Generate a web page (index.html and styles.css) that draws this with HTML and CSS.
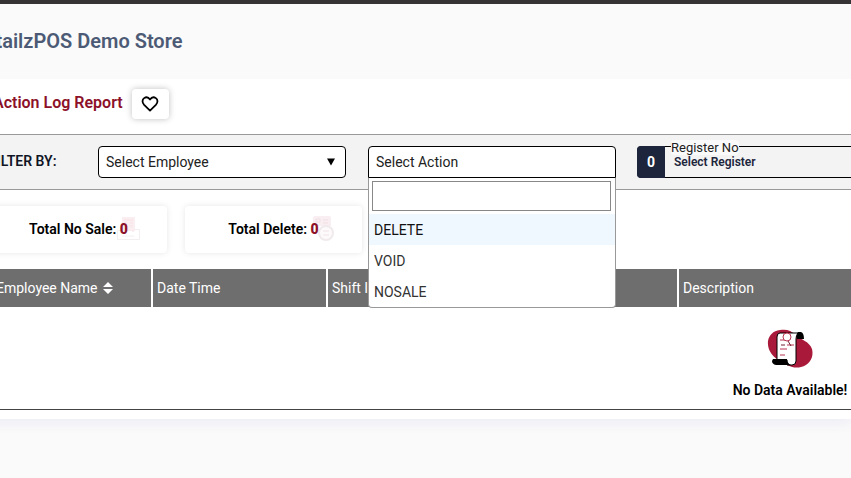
FILE: index.html
```html
<!DOCTYPE html>
<html lang="en">
<head>
    <meta charset="UTF-8">
    <meta name="viewport" content="width=device-width, initial-scale=1.0">
    <title>Action Log Report</title>
    <link rel="stylesheet" href="styles.css">
</head>
<body>
<div class="page">
    <header class="store-header">
        <h2 class="store-name">RetailzPOS Demo Store</h2>
    </header>

    <main class="report">
        <div class="title-row">
            <h1 class="report-title">Action Log Report</h1>
            <button class="fav-btn" type="button" aria-label="Favourite">
                <svg width="18" height="16" viewBox="0 0 20 18" fill="none" stroke="#000" stroke-width="2" stroke-linejoin="round">
                    <path d="M10 16.5 L3.4 10 C0.8 7.2 1.2 4 3.4 2.4 C5.8 0.8 8.4 1.6 10 4 C11.6 1.6 14.2 0.8 16.6 2.4 C18.8 4 19.2 7.2 16.6 10 Z"/>
                </svg>
            </button>
        </div>

        <!-- Filters -->
        <form class="filters">
            <span class="filters-label">FILTER BY:</span>
            <div class="select-wrap">
                <select class="control" aria-label="Employee">
                    <option>Select Employee</option>
                </select>
                <svg class="caret" width="8" height="8" viewBox="0 0 8 8"><path d="M0 0.5h8L4 7.5z"/></svg>
            </div>
            <div class="combo">
                <button class="control combo-btn" type="button" aria-haspopup="listbox" aria-expanded="true">Select Action</button>
                <div class="combo-menu">
                    <input class="combo-search" type="text" aria-label="Search action">
                    <ul class="combo-list" role="listbox">
                        <li class="combo-option active" role="option" aria-selected="true">DELETE</li>
                        <li class="combo-option" role="option">VOID</li>
                        <li class="combo-option" role="option">NOSALE</li>
                    </ul>
                </div>
            </div>
            <div class="register">
                <span class="register-count">0</span>
                <label class="register-label" for="register">Register No</label>
                <button class="register-btn" id="register" type="button">Select Register</button>
            </div>
        </form>

        <!-- Totals -->
        <div class="totals">
            <div class="total-card">
                <svg class="total-icon" width="26" height="26" viewBox="0 0 26 26">
                    <path fill="#fbeef1" d="M7 1h13v14H7z"/>
                    <path fill="none" stroke="#f6e0e5" d="M9 4h9M9 7h3M15 7h3M9 10h3M15 10h3M17 15h2"/>
                    <path fill="none" stroke="#f3eef0" d="M2.5 14.5h5M19.5 13.5h5v10h-22v-9M7 20h12"/>
                </svg>
                <span>Total No Sale: <b class="total-value">0</b></span>
            </div>
            <div class="total-card">
                <svg class="total-icon" width="26" height="26" viewBox="0 0 26 26">
                    <path fill="#f9eef1" d="M3 2q0-2 2-2h14q2 0 2 2v8H3z"/>
                    <path fill="none" stroke="#f1dfe4" d="M6 3h4v3H6zM13 4h5M13 7h5"/>
                    <circle cx="16" cy="17" r="7" fill="#fdfafb" stroke="#f0eaec" stroke-width="2"/>
                    <path fill="none" stroke="#f6eef0" stroke-width="2" d="M13 15h6M13 19h6"/>
                </svg>
                <span>Total Delete: <b class="total-value">0</b></span>
            </div>
        </div>

        <div class="table-wrap">
            <table class="log-table">
                <thead>
                <tr>
                    <th class="col-employee">Employee Name
                        <svg class="sort" width="10" height="12" viewBox="0 0 10 12"><path fill="#fff" d="M5 0l5 5H0zM0 7h10l-5 5z"/></svg>
                    </th>
                    <th class="col-date">Date Time</th>
                    <th class="col-shift">Shift Id</th>
                    <th>Description</th>
                </tr>
                </thead>
                <tbody>
                <tr>
                    <td class="empty" colspan="4">
                        <svg class="empty-icon" width="46" height="40" viewBox="0 0 46 40">
                            <path fill="#a9193a" d="M13 1C19 0 24 1 29 6C34 11 42 12 45 20C47 28 43 36 34 38C26 40 19 36 14 32C6 29 0 21 1 12C2 6 6 2 13 1Z"/>
                            <path fill="#fff" stroke="#000" d="M13 4H31Q29 6 29 10V32Q29 36 25 36H20V31H10V8Q10 4 13 4Z"/>
                            <path d="M31 3H34Q37 4 37 10H30V6Q30 4 31 3ZM6 30H20Q20 34 24 36H9Q5 35 5 32Z"/>
                            <path fill="none" stroke="#b83550" d="M13 11h6M13 20h7M13 26h5M20 16h7"/>
                            <circle cx="20" cy="8" r="4" fill="#fff" stroke="#b83550"/>
                            <path fill="none" stroke="#702030" d="M21 12l3 5M14 16h4"/>
                        </svg>
                        <span class="empty-text">No Data Available!</span>
                    </td>
                </tr>
                </tbody>
            </table>
        </div>
    </main>
</div>
</body>
</html>
```

FILE: styles.css
```css
* {
    box-sizing: border-box;
}

body {
    margin: 0;
    min-height: 100vh;
    overflow: hidden;
    background-color: #fafafa;
    border-top: 4px solid #353334;
    font-family: Roboto, "Liberation Sans", sans-serif;
    font-size: 14px;
    color: #000;
}

button, input, select {
    font: inherit;
    color: inherit;
}

/* the page is scrolled a little to the right */
.page {
    margin-left: -32px;
}

.store-header {
    display: flex;
    align-items: center;
    height: 75px;
    padding: 0 4px 2px;
}

.store-name {
    margin: 0;
    font-size: 20px;
    font-weight: 600;
    color: #4c5a75;
}

.report {
    padding-bottom: 9px;
    background-color: #fff;
    box-shadow: 0 4px 12px #ececf6;
    clip-path: inset(0 0 -24px 0);
}

.title-row {
    display: flex;
    align-items: center;
    gap: 9px;
    padding: 10px 25px 15px;
}

.report-title {
    margin: 0;
    padding-bottom: 4px;
    font-size: 16px;
    font-weight: 600;
    color: #8c1129;
}

.fav-btn {
    display: flex;
    align-items: center;
    justify-content: center;
    width: 37px;
    height: 30px;
    padding: 0;
    border: none;
    border-radius: 4px;
    background-color: #fff;
    box-shadow: 0 0 6px rgba(0, 0, 0, 0.25);
}

.filters {
    display: grid;
    grid-template-columns: 87px 248px 248px 248px;
    column-gap: 22px;
    align-items: center;
    height: 56px;
    padding-left: 21px;
    border-top: 1px solid #999;
    border-bottom: 1px solid #999;
    background-color: #f3f3f3;
}

.filters-label {
    padding-bottom: 3px;
    font-weight: 600;
    color: #101526;
}

.select-wrap, .combo, .register {
    position: relative;
}

.control {
    display: block;
    width: 100%;
    height: 32px;
    padding: 0 7px;
    border: 1px solid #000;
    border-radius: 4px;
    background-color: #fff;
    color: #222;
    text-align: left;
    appearance: none;
}

.caret {
    position: absolute;
    top: 12px;
    right: 11px;
    pointer-events: none;
}

.combo-btn {
    border-radius: 4px 4px 0 0;
}

.combo-menu {
    position: absolute;
    z-index: 2;
    top: 100%;
    left: 0;
    right: 0;
    border: 1px solid #999;
    border-top: none;
    border-radius: 0 0 4px 4px;
    background-color: #fff;
}

.combo-search {
    display: block;
    width: calc(100% - 7px);
    height: 30px;
    margin: 3px;
    border: 1px solid #888;
}

.combo-list {
    margin: 0;
    padding: 0;
    list-style: none;
}

.combo-option {
    padding: 1px 5px 0;
    line-height: 30px;
    color: #333;
}

.combo-option.active {
    background-color: #f0f8ff;
    color: #111;
}

.register {
    display: flex;
    height: 32px;
    margin-left: -1px;
    border: 1px solid #000;
    border-radius: 4px;
}

.register-count {
    display: flex;
    align-items: center;
    justify-content: center;
    width: 28px;
    margin: -1px 0 -1px -1px;
    border-radius: 4px 0 0 4px;
    background-color: #1c253b;
    color: #fff;
    font-weight: 700;
}

.register-label {
    position: absolute;
    top: -7px;
    left: 33px;
    border-radius: 4px;
    background-color: #fafafa;
    font-size: 13px;
    line-height: 15px;
    color: #222;
}

.register-btn {
    flex: 1;
    padding: 0 9px;
    border: none;
    background: none;
    font-size: 12px;
    font-weight: 600;
    color: #1c253b;
    text-align: left;
}

.totals {
    display: flex;
    gap: 18px;
    padding: 16px 24px 16px 22px;
}

.total-card {
    position: relative;
    display: flex;
    align-items: center;
    justify-content: center;
    width: 177px;
    height: 47px;
    padding-bottom: 1px;
    border-radius: 4px;
    box-shadow: 0 0 6px rgba(0, 0, 0, 0.1);
    font-weight: 600;
}

.total-card span {
    position: relative;
}

.total-icon {
    position: absolute;
    top: 10px;
    right: 26px;
}

.total-value {
    color: #8c1129;
}

.table-wrap {
    padding-left: 24px;
    overflow: hidden;
}

.log-table {
    width: 100%;
    min-width: 1596px;
    table-layout: fixed;
    border-collapse: separate;
    border-spacing: 0;
    border-bottom: 1px solid #444;
}

.log-table th {
    height: 38px;
    padding: 0 4px;
    border-right: 2px solid #fff;
    background-color: #6e6e6e;
    color: #fff;
    font-weight: 400;
    text-align: left;
}

.col-employee {
    width: 161px;
}

.col-date {
    width: 175px;
}

.col-shift {
    width: 351px;
}

.sort {
    margin-left: 2px;
    vertical-align: -1px;
}

.empty {
    padding: 22px 0 11px;
    text-align: center;
}

.empty-icon {
    display: block;
    margin: 0 auto 13px;
}

.empty-text {
    display: block;
    line-height: 16px;
    font-weight: 600;
}
```
